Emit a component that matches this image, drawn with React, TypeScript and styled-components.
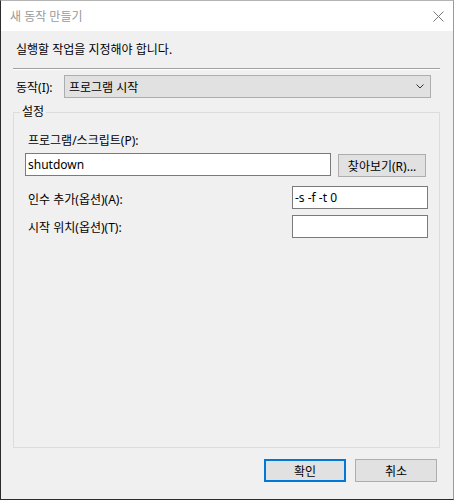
import React from "react";
import styled, { createGlobalStyle } from "styled-components";

const GlobalStyle = createGlobalStyle`
  * { box-sizing: border-box; }
  html, body { margin: 0; padding: 0; background: #f0f0f0; }
  body {
    font-family: "Noto Sans", "Noto Sans CJK KR", sans-serif;
    font-size: 12px;
    color: #000;
  }
`;

const App = () => {
  return (
    <>
      <GlobalStyle />
      <Frame>
        <TitleBar>
          <Title>새 동작 만들기</Title>
          <CloseBtn type="button" aria-label="닫기">
            <svg width="11" height="11" viewBox="0 0 11 11">
              <path d="M0.5 0.5 L10.5 10.5 M10.5 0.5 L0.5 10.5" stroke="#777" strokeWidth="1" fill="none" />
            </svg>
          </CloseBtn>
        </TitleBar>
        <Body>
          <Intro>실행할 작업을 지정해야 합니다.</Intro>
          <Separator />
          <ActionRow>
            <ActionLabel>동작(I):</ActionLabel>
            <Select>
              <span>프로그램 시작</span>
              <svg width="8" height="5" viewBox="0 0 8 5">
                <path d="M0.5 0.5 L4 4 L7.5 0.5" stroke="#333" strokeWidth="1" fill="none" />
              </svg>
            </Select>
          </ActionRow>
          <Group>
            <Legend>설정</Legend>
            <FieldLabel $top={14}>프로그램/스크립트(P):</FieldLabel>
            <ProgramRow>
              <TextBox $width={307} value="shutdown" readOnly />
              <PushButton type="button" $width={88}>
                찾아보기(R)...
              </PushButton>
            </ProgramRow>
            <OptionRow $top={9}>
              <FieldLabel $top={6}>인수 추가(옵션)(A):</FieldLabel>
              <TextBox $width={136} value="-s -f -t 0" readOnly />
            </OptionRow>
            <OptionRow $top={6}>
              <FieldLabel $top={5}>시작 위치(옵션)(T):</FieldLabel>
              <TextBox $width={136} value="" readOnly />
            </OptionRow>
          </Group>
          <Footer>
            <PushButton type="button" $width={82} $primary>
              확인
            </PushButton>
            <PushButton type="button" $width={82}>
              취소
            </PushButton>
          </Footer>
        </Body>
      </Frame>
    </>
  );
};

export default App;

const Frame = styled.div`
  display: flex;
  flex-direction: column;
  width: 454px;
  height: 500px;
  background: #f0f0f0;
  border-top: 1px solid #b4b4b4;
  border-left: 1px solid #2b2b2b;
  border-right: 1px solid #9a9a9a;
  border-bottom: 1px solid #2b2b2b;
`;

const TitleBar = styled.div`
  display: flex;
  align-items: center;
  justify-content: space-between;
  height: 30px;
  padding: 0 9px 0 9px;
  background: #fff;
`;

const Title = styled.span`
  color: #999;
  font-size: 12px;
`;

const CloseBtn = styled.button`
  display: flex;
  padding: 0;
  border: 0;
  background: none;
`;

const Body = styled.div`
  display: flex;
  flex: 1;
  flex-direction: column;
  padding: 0 13px 0 12px;
`;

const Intro = styled.p`
  margin: 11px 0 0;
  padding-left: 3px;
  line-height: 16px;
`;

const Separator = styled.div`
  margin-top: 10px;
  height: 2px;
  border-top: 1px solid #a0a0a0;
  border-bottom: 1px solid #fff;
`;

const ActionRow = styled.div`
  display: flex;
  align-items: center;
  margin-top: 5px;
  height: 23px;
`;

const ActionLabel = styled.label`
  width: 51px;
  padding-left: 3px;
`;

const Select = styled.div`
  display: flex;
  align-items: center;
  justify-content: space-between;
  width: 367px;
  height: 23px;
  padding: 0 6px 0 4px;
  background: #e1e1e1;
  border: 1px solid #adadad;
`;

const Group = styled.fieldset`
  display: flex;
  flex: 1;
  flex-direction: column;
  min-width: 0;
  margin: 7px 0 0;
  padding: 0 11px 0 11px;
  border: 1px solid #dcdcdc;
`;

const Legend = styled.legend`
  margin-left: -5px;
  padding: 0 2px;
  line-height: 14px;
`;

const FieldLabel = styled.label<{ $top: number }>`
  display: block;
  margin-top: ${({ $top }) => $top}px;
  padding-left: 3px;
  line-height: 16px;
`;

const ProgramRow = styled.div`
  display: flex;
  align-items: flex-start;
  margin-top: 4px;
`;

const OptionRow = styled.div<{ $top: number }>`
  display: flex;
  align-items: flex-start;
  justify-content: space-between;
  margin-top: ${({ $top }) => $top}px;
`;

const TextBox = styled.input<{ $width: number }>`
  width: ${({ $width }) => $width}px;
  height: 23px;
  padding: 0 3px 1px 2px;
  font: inherit;
  color: #000;
  background: #fff;
  border: 1px solid #7a7a7a;
  border-radius: 0;
  outline: none;
`;

const PushButton = styled.button<{ $width: number; $primary?: boolean }>`
  width: ${({ $width }) => $width}px;
  height: 23px;
  padding: 0;
  font: inherit;
  color: #000;
  background: #e1e1e1;
  border: ${({ $primary }) => ($primary ? "2px solid #0078d7" : "1px solid #adadad")};
  border-radius: 0;

  ${ProgramRow} & {
    margin: 1px 2px 0 7px;
  }
`;

const Footer = styled.div`
  display: flex;
  justify-content: flex-end;
  gap: 9px;
  margin-top: 11px;
  padding: 0 3px 17px 0;
`;
